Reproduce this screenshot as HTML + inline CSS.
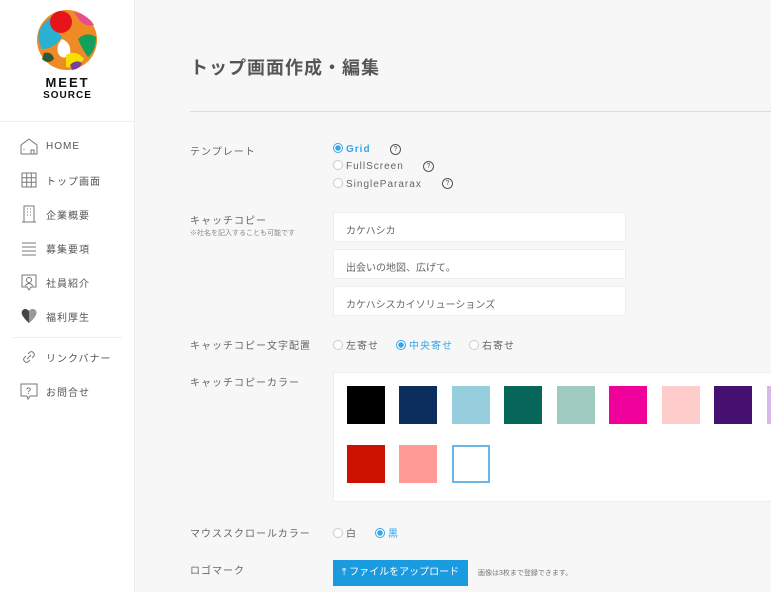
<!DOCTYPE html>
<html><head><meta charset="utf-8"><style>
*{margin:0;padding:0;box-sizing:border-box}
body{width:771px;height:592px;overflow:hidden;background:#f7f7f7;font-family:"Liberation Sans","Noto Sans CJK JP",sans-serif;color:#555;position:relative}
.side{position:absolute;left:0;top:0;width:135px;height:592px;background:#fff;border-right:1px solid #eee}
.abs{position:absolute}
.nav{position:absolute;left:20px;font-size:10px;letter-spacing:1px;color:#555;display:flex;align-items:center}
.nav svg{margin-right:8px}
.lbl{position:absolute;left:190px;font-size:10px;color:#666;letter-spacing:1px}
.inp{position:absolute;left:333px;width:293px;height:30px;background:#fff;border:1px solid #eee;font-size:10px;color:#666;padding:9px 12px}
.rad{display:inline-block;width:10px;height:10px;border:1px solid #ccc;border-radius:50%;vertical-align:-1px;margin-right:3px;background:#fff}
.rad.on{border-color:#36a6e6;background:radial-gradient(#36a6e6 2.5px,#fff 3px)}
.q{position:absolute;display:inline-block;width:11px;height:11px;border:1px solid #555;border-radius:50%;font-size:7px;text-align:center;line-height:9px;color:#555}
.opt{position:absolute;font-size:10px;color:#666;letter-spacing:1px}
.sw{position:absolute;width:38px;height:38px}
</style></head><body>
<div class="side">
<svg class="abs" style="left:36px;top:9px" width="62" height="62" viewBox="0 0 62 62">
<circle cx="31" cy="31" r="30" fill="#f08a24"/>
<path d="M3 22 Q10 8 22 6 Q18 20 26 28 Q18 40 6 40 Q1 32 3 22Z" fill="#2ab0d0"/>
<circle cx="25" cy="13" r="11" fill="#e8141c"/>
<path d="M38 3 Q52 6 58 16 Q50 18 44 12Z" fill="#e94e8a"/>
<path d="M42 30 Q50 22 60 28 Q60 42 52 48 Q46 40 42 30Z" fill="#12a05a"/>
<path d="M26 30 Q36 34 34 46 Q26 52 22 44 Q20 36 26 30Z" fill="#fff"/>
<path d="M30 46 Q40 40 48 50 Q40 60 30 58Z" fill="#f5e000"/>
<path d="M34 56 Q40 50 46 54 Q44 60 36 61Z" fill="#7a3fa0"/>
<path d="M8 44 Q16 42 18 50 Q12 56 6 50Z" fill="#2d5a3a"/>
</svg>
<div class="abs" style="left:0;width:135px;top:77px;text-align:center;font-weight:bold;font-size:13px;letter-spacing:2px;color:#111;line-height:12px">MEET</div>
<div class="abs" style="left:0;width:135px;top:90px;text-align:center;font-weight:bold;font-size:10px;letter-spacing:1px;color:#111">SOURCE</div>
<div class="abs" style="left:0;top:121px;width:135px;height:1px;background:#eee"></div>
<div class="nav" style="top:137px"><svg width="18" height="18" viewBox="0 0 18 18" fill="none" stroke="#777"><path d="M1 17V8L9 2l8 6v9H1M11 17v-4h3v4M4 12v1"/></svg>HOME</div>
<div class="nav" style="top:171px"><svg width="18" height="18" viewBox="0 0 18 18" fill="none" stroke="#777"><path d="M2 2h14v14H2zM2 6.7h14M2 11.3h14M6.7 2v14M11.3 2v14"/></svg>トップ画面</div>
<div class="nav" style="top:205px"><svg width="18" height="18" viewBox="0 0 18 18" fill="none" stroke="#777"><path d="M4 1h10v16H4zM2 17h14M7 4h1M10 4h1M7 7h1M10 7h1M7 10h1M10 10h1"/></svg>企業概要</div>
<div class="nav" style="top:239px"><svg width="18" height="18" viewBox="0 0 18 18" fill="none" stroke="#777"><path d="M2 4h14M2 8h14M2 12h14M2 16h14"/></svg>募集要項</div>
<div class="nav" style="top:273px"><svg width="18" height="18" viewBox="0 0 18 18" fill="none" stroke="#777"><path d="M2 2h14v12H11l-2 3-2-3H2z"/><circle cx="9" cy="7" r="2.5"/><path d="M5 13q4-5 8 0"/></svg>社員紹介</div>
<div class="nav" style="top:307px"><svg width="18" height="18" viewBox="0 0 18 18"><path d="M9 4Q5 0 2 4Q0 8 9 16Q18 8 16 4Q13 0 9 4Z" fill="#444"/><path d="M9 4V16Q18 8 16 4Q13 0 9 4Z" fill="#999"/></svg>福利厚生</div>
<div class="abs" style="left:12px;top:337px;width:110px;height:1px;background:#eee"></div>
<div class="nav" style="top:348px"><svg width="18" height="18" viewBox="0 0 18 18" fill="none" stroke="#777"><path d="M8 6l2-2a3 3 0 014 4l-2 2M10 12l-2 2a3 3 0 01-4-4l2-2M7 11l4-4"/></svg>リンクバナー</div>
<div class="nav" style="top:382px"><svg width="18" height="18" viewBox="0 0 18 18" fill="none" stroke="#777"><path d="M1 2h16v12H10l-2 3-1-3H1z"/><text x="9" y="12" font-size="9" fill="#555" stroke="none" text-anchor="middle">?</text></svg>お問合せ</div>
</div>

<div class="abs" style="left:190px;top:54px;font-size:18px;font-weight:bold;color:#555;letter-spacing:1px">トップ画面作成・編集</div>
<div class="abs" style="left:190px;top:111px;width:581px;height:1px;background:#ddd"></div>

<div class="lbl" style="top:143px">テンプレート</div>
<div class="opt" style="left:333px;top:143px;color:#36a6e6;font-weight:bold"><span class="rad on"></span>Grid</div>
<span class="q" style="left:390px;top:144px">?</span>
<div class="opt" style="left:333px;top:160px"><span class="rad"></span>FullScreen</div>
<span class="q" style="left:423px;top:161px">?</span>
<div class="opt" style="left:333px;top:178px"><span class="rad"></span>SinglePararax</div>
<span class="q" style="left:442px;top:178px">?</span>

<div class="lbl" style="top:212px">キャッチコピー</div>
<div class="abs" style="left:190px;top:228px;font-size:7px;color:#888">※社名を記入することも可能です</div>
<div class="inp" style="top:212px">カケハシカ</div>
<div class="inp" style="top:249px">出会いの地図、広げて。</div>
<div class="inp" style="top:286px">カケハシスカイソリューションズ</div>

<div class="lbl" style="top:337px">キャッチコピー文字配置</div>
<div class="opt" style="left:333px;top:337px"><span class="rad"></span>左寄せ</div>
<div class="opt" style="left:396px;top:337px;color:#36a6e6"><span class="rad on"></span>中央寄せ</div>
<div class="opt" style="left:469px;top:337px"><span class="rad"></span>右寄せ</div>

<div class="lbl" style="top:374px">キャッチコピーカラー</div>
<div class="abs" style="left:333px;top:372px;width:450px;height:130px;background:#fff;border:1px solid #eee"></div>
<div class="sw" style="left:347px;top:386px;background:#000"></div>
<div class="sw" style="left:399px;top:386px;background:#0b2e5e"></div>
<div class="sw" style="left:452px;top:386px;background:#96cedd"></div>
<div class="sw" style="left:504px;top:386px;background:#06665a"></div>
<div class="sw" style="left:557px;top:386px;background:#9fcbc0"></div>
<div class="sw" style="left:609px;top:386px;background:#f0009a"></div>
<div class="sw" style="left:662px;top:386px;background:#ffcccc"></div>
<div class="sw" style="left:714px;top:386px;background:#461070"></div>
<div class="sw" style="left:767px;top:386px;background:#d8b8e8"></div>
<div class="sw" style="left:347px;top:445px;background:#cc1100"></div>
<div class="sw" style="left:399px;top:445px;background:#ff9a96"></div>
<div class="sw" style="left:452px;top:445px;background:#fff;border:2px solid #6ab8ea"></div>

<div class="lbl" style="top:525px">マウススクロールカラー</div>
<div class="opt" style="left:333px;top:525px"><span class="rad"></span>白</div>
<div class="opt" style="left:375px;top:525px;color:#36a6e6"><span class="rad on"></span>黒</div>

<div class="lbl" style="top:562px">ロゴマーク</div>
<div class="abs" style="left:333px;top:560px;width:135px;height:26px;background:#1a9be0;color:#fff;font-size:10px;text-align:center;line-height:26px">⤒ ファイルをアップロード</div>
<div class="abs" style="left:478px;top:568px;font-size:7px;color:#777">画像は3枚まで登録できます。</div>
</body></html>
